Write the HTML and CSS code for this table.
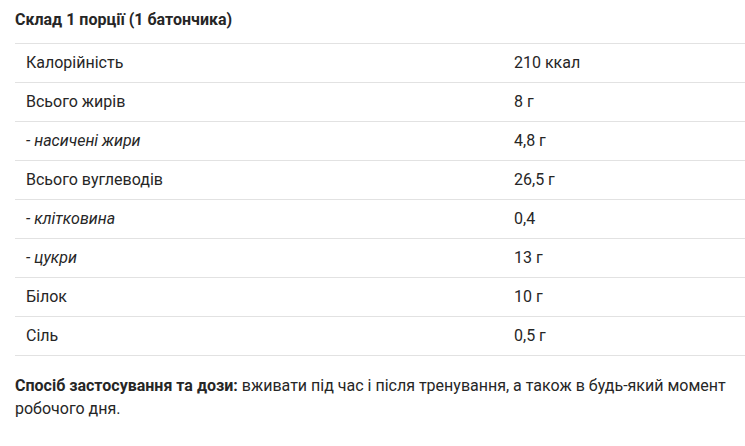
FILE: index.html
```html
<!DOCTYPE html>
<html lang="uk">
<head>
<meta charset="utf-8">
<link rel="stylesheet" href="styles.css">
</head>
<body>
<div class="content">
  <h3 class="title">Склад 1 порції (1 батончика)</h3>
  <table class="facts">
    <tr><td>Калорійність</td><td>210 ккал</td></tr>
    <tr><td>Всього жирів</td><td>8 г</td></tr>
    <tr><td><em>- насичені жири</em></td><td>4,8 г</td></tr>
    <tr><td>Всього вуглеводів</td><td>26,5 г</td></tr>
    <tr><td><em>- клітковина</em></td><td>0,4</td></tr>
    <tr><td><em>- цукри</em></td><td>13 г</td></tr>
    <tr><td>Білок</td><td>10 г</td></tr>
    <tr><td>Сіль</td><td>0,5 г</td></tr>
  </table>
  <p class="usage"><strong>Спосіб застосування та дози:</strong> вживати під час і після тренування, а також в будь-який момент робочого дня.</p>
</div>
</body>
</html>
```
FILE: styles.css
```css
html, body {
  margin: 0;
  padding: 0;
  background: #fff;
}
body {
  font-family: Roboto, "Liberation Sans", sans-serif;
  font-size: 16px;
  color: #262626;
}
.content {
  padding: 0 0 0 15px;
}
.title {
  margin: 0;
  padding-top: 10px;
  font-size: 16px;
  font-weight: 700;
  line-height: 20px;
  height: 43px;
  box-sizing: border-box;
}
.facts {
  width: 730px;
  border-collapse: collapse;
  border-top: 1px solid #e2e2e2;
}
.facts td {
  height: 38px;
  padding: 0 11px;
  border-bottom: 1px solid #e2e2e2;
  vertical-align: middle;
  line-height: 20px;
}
.facts td:first-child {
  width: 466px;
}
.usage {
  margin: 18px 0 0;
  line-height: 23px;
  padding-right: 15px;
}
```
